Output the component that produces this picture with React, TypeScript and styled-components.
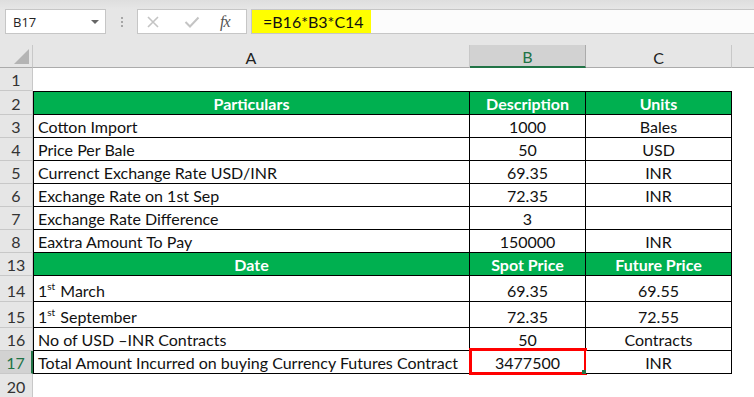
import React from "react";
import styled, { createGlobalStyle } from "styled-components";

const GlobalStyle = createGlobalStyle`
  html, body {
    margin: 0;
    padding: 0;
    background: #fff;
  }
  body {
    font-family: Lato, "Liberation Sans", sans-serif;
    overflow: hidden;
  }
`;

const Sheet = styled.div`
  width: 754px;
  height: 397px;
  overflow: hidden;
  background: #fff;
`;

const FormulaBar = styled.div`
  height: 45px;
  box-sizing: border-box;
  background: linear-gradient(#dedede, #e6e6e6 9px);
  display: flex;
  align-items: flex-start;
  padding: 9px 0 0 5px;
`;

const NameBox = styled.div`
  width: 101px;
  height: 25px;
  box-sizing: border-box;
  background: #fff;
  border: 1px solid #c6c6c6;
  display: flex;
  align-items: center;
  justify-content: space-between;
  padding: 0 6px 0 7px;
  font-family: "Open Sans", sans-serif;
  font-size: 13px;
  color: #222;
`;

const Caret = styled.span`
  width: 0;
  height: 0;
  border-left: 4px solid transparent;
  border-right: 4px solid transparent;
  border-top: 4px solid #666;
`;

const Dots = styled.div`
  width: 31px;
  height: 25px;
  display: flex;
  flex-direction: column;
  align-items: center;
  justify-content: center;
  gap: 2px;
  span {
    width: 2px;
    height: 2px;
    background: #a6a6a6;
  }
`;

const FxBox = styled.div`
  width: 110px;
  height: 25px;
  box-sizing: border-box;
  background: #fff;
  border: 1px solid #c6c6c6;
  display: flex;
  align-items: center;
  padding-left: 8px;
  svg:nth-child(2) {
    margin-left: 24px;
  }
`;

const FxLabel = styled.span`
  font-family: "Liberation Serif", serif;
  font-style: italic;
  font-size: 16px;
  color: #555;
  letter-spacing: -1px;
  margin-left: 20px;
`;

const FormulaInput = styled.div`
  flex: 1;
  margin-left: 4px;
  height: 25px;
  box-sizing: border-box;
  background: #fcfcfc;
  border: 1px solid #c6c6c6;
  border-right: none;
  display: flex;
`;

const Highlight = styled.span`
  background: #ffff00;
  padding: 0 7px 0 11px;
  display: flex;
  align-items: center;
  font-size: 16px;
  color: #111;
`;

const Row = styled.div<{ $h: number }>`
  display: grid;
  grid-template-columns: 33px 437px 116px 146px 1fr;
  height: ${(p) => p.$h}px;
`;

const Corner = styled.div`
  background: #e6e6e6;
  border-right: 1px solid #c8c8c8;
  border-bottom: 1px solid #ababab;
  position: relative;
  &::after {
    content: "";
    position: absolute;
    right: 3px;
    bottom: 3px;
    border-left: 15px solid transparent;
    border-bottom: 15px solid #b4b4b4;
  }
`;

const ColHead = styled.div<{ $sel?: boolean }>`
  background: ${(p) => (p.$sel ? "#d2d2d2" : "#e6e6e6")};
  border-right: 1px solid ${(p) => (p.$sel ? "#ababab" : "#c8c8c8")};
  border-bottom: ${(p) => (p.$sel ? "2px solid #217346" : "1px solid #ababab")};
  display: flex;
  align-items: center;
  justify-content: center;
  font-size: 16px;
  color: ${(p) => (p.$sel ? "#217346" : "#222")};
  padding-top: 2px;
`;

const ColFill = styled.div`
  background: #e6e6e6;
  border-bottom: 1px solid #ababab;
`;

const RowHead = styled.div<{ $sel?: boolean }>`
  background: ${(p) => (p.$sel ? "#d2d2d2" : "#e6e6e6")};
  border-bottom: 1px solid #c8c8c8;
  border-right: ${(p) => (p.$sel ? "2px solid #217346" : "1px solid #c8c8c8")};
  display: flex;
  align-items: flex-end;
  justify-content: center;
  padding-bottom: 1px;
  font-size: 16px;
  color: ${(p) => (p.$sel ? "#217346" : "#333")};
`;

const Cell = styled.div<{ $head?: boolean; $align?: "left" | "center"; $top?: boolean; $first?: boolean }>`
  position: relative;
  display: flex;
  align-items: flex-end;
  justify-content: ${(p) => (p.$align === "left" ? "flex-start" : "center")};
  padding: 0 0 1px ${(p) => (p.$align === "left" ? "4px" : "0")};
  background: ${(p) => (p.$head ? "#00b050" : "#fff")};
  color: ${(p) => (p.$head ? "#fff" : "#111")};
  font-weight: ${(p) => (p.$head ? 700 : 400)};
  font-size: 16px;
  white-space: nowrap;
  border-right: 1px solid #000;
  border-bottom: 1px solid #000;
  border-left: ${(p) => (p.$first ? "1px solid #000" : "none")};
  border-top: ${(p) => (p.$top ? "1px solid #000" : "none")};
  sup {
    font-size: 10px;
    line-height: 0;
    vertical-align: 7px;
    margin-right: 1px;
  }
`;

const Blank = styled.div``;

const ActiveCell = styled.div`
  position: absolute;
  top: -3px;
  left: -1px;
  right: -2px;
  bottom: -2px;
  border: 3px solid #ff0000;
  pointer-events: none;
  &::after {
    content: "";
    position: absolute;
    right: -2px;
    bottom: -2px;
    width: 4px;
    height: 4px;
    background: #217346;
  }
`;

type Line = {
  n: number;
  h: number;
  cells: React.ReactNode[];
  head?: boolean;
  top?: boolean;
};

const lines: Line[] = [
  { n: 2, h: 24, top: true, head: true, cells: ["Particulars", "Description", "Units"] },
  { n: 3, h: 23, cells: ["Cotton Import", "1000", "Bales"] },
  { n: 4, h: 23, cells: ["Price Per Bale", "50", "USD"] },
  { n: 5, h: 23, cells: ["Currenct Exchange Rate USD/INR", "69.35", "INR"] },
  { n: 6, h: 23, cells: ["Exchange Rate on 1st Sep", "72.35", "INR"] },
  { n: 7, h: 23, cells: ["Exchange Rate Difference", "3", ""] },
  { n: 8, h: 23, cells: ["Eaxtra Amount To Pay", "150000", "INR"] },
  { n: 13, h: 23, head: true, cells: ["Date", "Spot Price", "Future Price"] },
  { n: 14, h: 26, cells: [<>1<sup>st</sup> March</>, "69.35", "69.55"] },
  { n: 15, h: 26, cells: [<>1<sup>st</sup> September</>, "72.35", "72.55"] },
  { n: 16, h: 23, cells: ["No of USD \u2013INR Contracts", "50", "Contracts"] },
  { n: 17, h: 23, cells: ["Total Amount Incurred on buying Currency Futures Contract", "3477500", "INR"] },
];

const X = () => (
  <svg width="14" height="14" viewBox="0 0 14 14">
    <path d="M2 2 L12 12 M12 2 L2 12" stroke="#c4c4c4" strokeWidth="1.6" fill="none" />
  </svg>
);

const Check = () => (
  <svg width="16" height="14" viewBox="0 0 16 14">
    <path d="M1.5 7 L6 11.5 L14.5 2.5" stroke="#c4c4c4" strokeWidth="2" fill="none" />
  </svg>
);

export default function App() {
  return (
    <Sheet>
      <GlobalStyle />
      <FormulaBar>
        <NameBox>
          B17
          <Caret />
        </NameBox>
        <Dots>
          <span />
          <span />
          <span />
        </Dots>
        <FxBox>
          <X />
          <Check />
          <FxLabel>fx</FxLabel>
        </FxBox>
        <FormulaInput>
          <Highlight>=B16*B3*C14</Highlight>
        </FormulaInput>
      </FormulaBar>

      <Row $h={22}>
        <Corner />
        <ColHead>A</ColHead>
        <ColHead $sel>B</ColHead>
        <ColHead>C</ColHead>
        <ColFill />
      </Row>

      <Row $h={24}>
        <RowHead>1</RowHead>
        <Blank />
        <Blank />
        <Blank />
        <Blank />
      </Row>

      {lines.map((l) => (
        <Row key={l.n} $h={l.h}>
          <RowHead $sel={l.n === 17}>{l.n}</RowHead>
          <Cell
            $first
            $align={l.head ? "center" : "left"}
            $head={l.head}
            $top={l.top}
          >
            <span>{l.cells[0]}</span>
          </Cell>
          <Cell $head={l.head} $top={l.top}>
            <span>{l.cells[1]}</span>
            {l.n === 17 && <ActiveCell />}
          </Cell>
          <Cell $head={l.head} $top={l.top}>
            <span>{l.cells[2]}</span>
          </Cell>
          <Blank />
        </Row>
      ))}

      <Row $h={24}>
        <RowHead>20</RowHead>
        <Blank />
        <Blank />
        <Blank />
        <Blank />
      </Row>
    </Sheet>
  );
}
